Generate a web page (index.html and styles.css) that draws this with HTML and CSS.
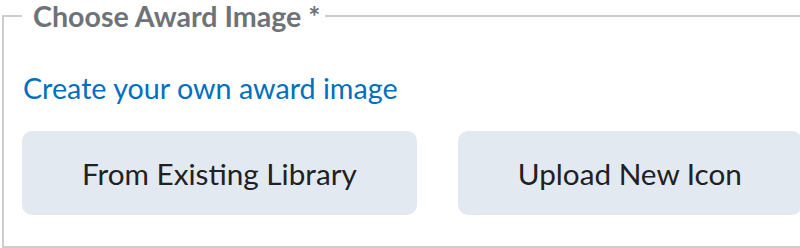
FILE: index.html
```html
<!DOCTYPE html>
<html lang="en">
<head>
<meta charset="utf-8">
<title>Choose Award Image</title>
<link rel="stylesheet" href="styles.css">
</head>
<body>
<fieldset class="award-fieldset">
  <legend class="award-legend">Choose Award Image *</legend>
  <a class="create-link" href="#">Create your own award image</a>
  <div class="button-row">
    <button class="award-btn" type="button">From Existing Library</button>
    <button class="award-btn" type="button">Upload New Icon</button>
  </div>
</fieldset>
</body>
</html>
```

FILE: styles.css
```css
html {
  overflow: hidden;
}
body {
  margin: 0;
  background: #ffffff;
  font-family: Lato, "Noto Sans", sans-serif;
}
.award-fieldset {
  margin: 0 -40px 0 2px;
  border: 2px solid #cdcdcd;
  padding: 0 18px 31px 18px;
  min-width: 0;
}
.award-legend {
  padding: 0 5px 0 11px;
  font-size: 28.6px;
  line-height: 32px;
  font-weight: 700;
  color: #6e7377;
}
.create-link {
  display: block;
  margin-top: 38px;
  font-size: 28.7px;
  line-height: 36px;
  color: #006fbf;
  text-decoration: none;
  padding-left: 1px;
}
.button-row {
  display: flex;
  gap: 41px;
  margin-top: 25px;
}
.award-btn {
  flex: 0 0 auto;
  white-space: nowrap;
  height: 84px;
  padding: 0 60px;
  border: none;
  border-radius: 10px;
  background: #e3e9f1;
  color: #202122;
  font-family: Lato, "Noto Sans", sans-serif;
  font-size: 29.7px;
  font-weight: 400;
}
```
